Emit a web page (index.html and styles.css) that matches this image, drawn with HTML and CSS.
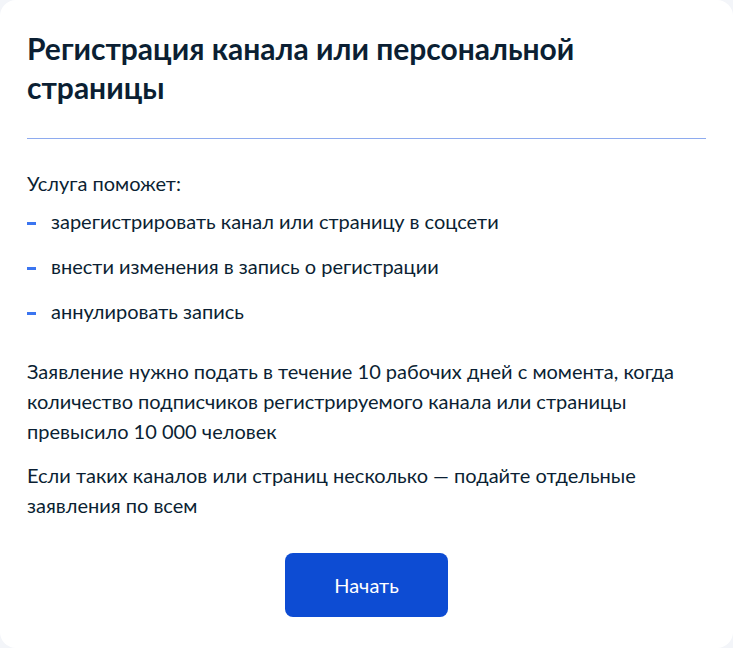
FILE: index.html
```html
<!DOCTYPE html>
<html lang="ru">
<head>
    <meta charset="UTF-8">
    <meta name="viewport" content="width=device-width, initial-scale=1.0">
    <title>Регистрация канала или персональной страницы</title>
    <link rel="stylesheet" href="styles.css">
</head>
<body>
    <div class="card">
        <h1 class="title">Регистрация канала или персональной страницы</h1>

        <div class="divider"></div>

        <p class="lead">Услуга поможет:</p>
        <ul class="list">
            <li>зарегистрировать канал или страницу в соцсети</li>
            <li>внести изменения в запись о регистрации</li>
            <li>аннулировать запись</li>
        </ul>

        <p class="text">Заявление нужно подать в течение 10 рабочих дней с момента, когда количество подписчиков регистрируемого канала или страницы превысило 10&nbsp;000 человек</p>
        <p class="text">Если таких каналов или страниц несколько — подайте отдельные заявления по всем</p>

        <div class="actions">
            <button class="btn">Начать</button>
        </div>
    </div>
</body>
</html>
```

FILE: styles.css
```css
* {
    margin: 0;
    padding: 0;
    box-sizing: border-box;
}

body {
    font-family: Lato, "Open Sans", sans-serif;
    background: #f3f5f9;
    color: #0b1f33;
}

.card {
    background: #fff;
    border-radius: 16px;
    min-height: 100vh;
    padding: 29px 27px 30px;
}

.title {
    font-size: 30px;
    font-weight: 700;
    line-height: 39px;
    padding-right: 100px;
}

.divider {
    height: 1px;
    background: #8eabef;
    margin: 31px 0 30px;
}

.lead {
    font-size: 20px;
    line-height: 28px;
}

.list {
    list-style: none;
    display: flex;
    flex-direction: column;
    gap: 17px;
    margin-top: 10px;
}

.list li {
    position: relative;
    font-size: 20px;
    line-height: 28px;
    padding-left: 24px;
}

.list li::before {
    content: "";
    position: absolute;
    left: 0;
    top: 15px;
    width: 9px;
    height: 3px;
    background: #3b75f0;
}

.text {
    font-size: 20px;
    line-height: 30px;
    margin-bottom: 14px;
}

.list + .text {
    margin-top: 31px;
}

.actions {
    display: flex;
    justify-content: center;
    margin-top: 33px;
}

.btn {
    width: 163px;
    height: 64px;
    border: none;
    border-radius: 8px;
    background: #0d4cd3;
    color: #fff;
    font-family: inherit;
    font-size: 20px;
    cursor: pointer;
}
```
